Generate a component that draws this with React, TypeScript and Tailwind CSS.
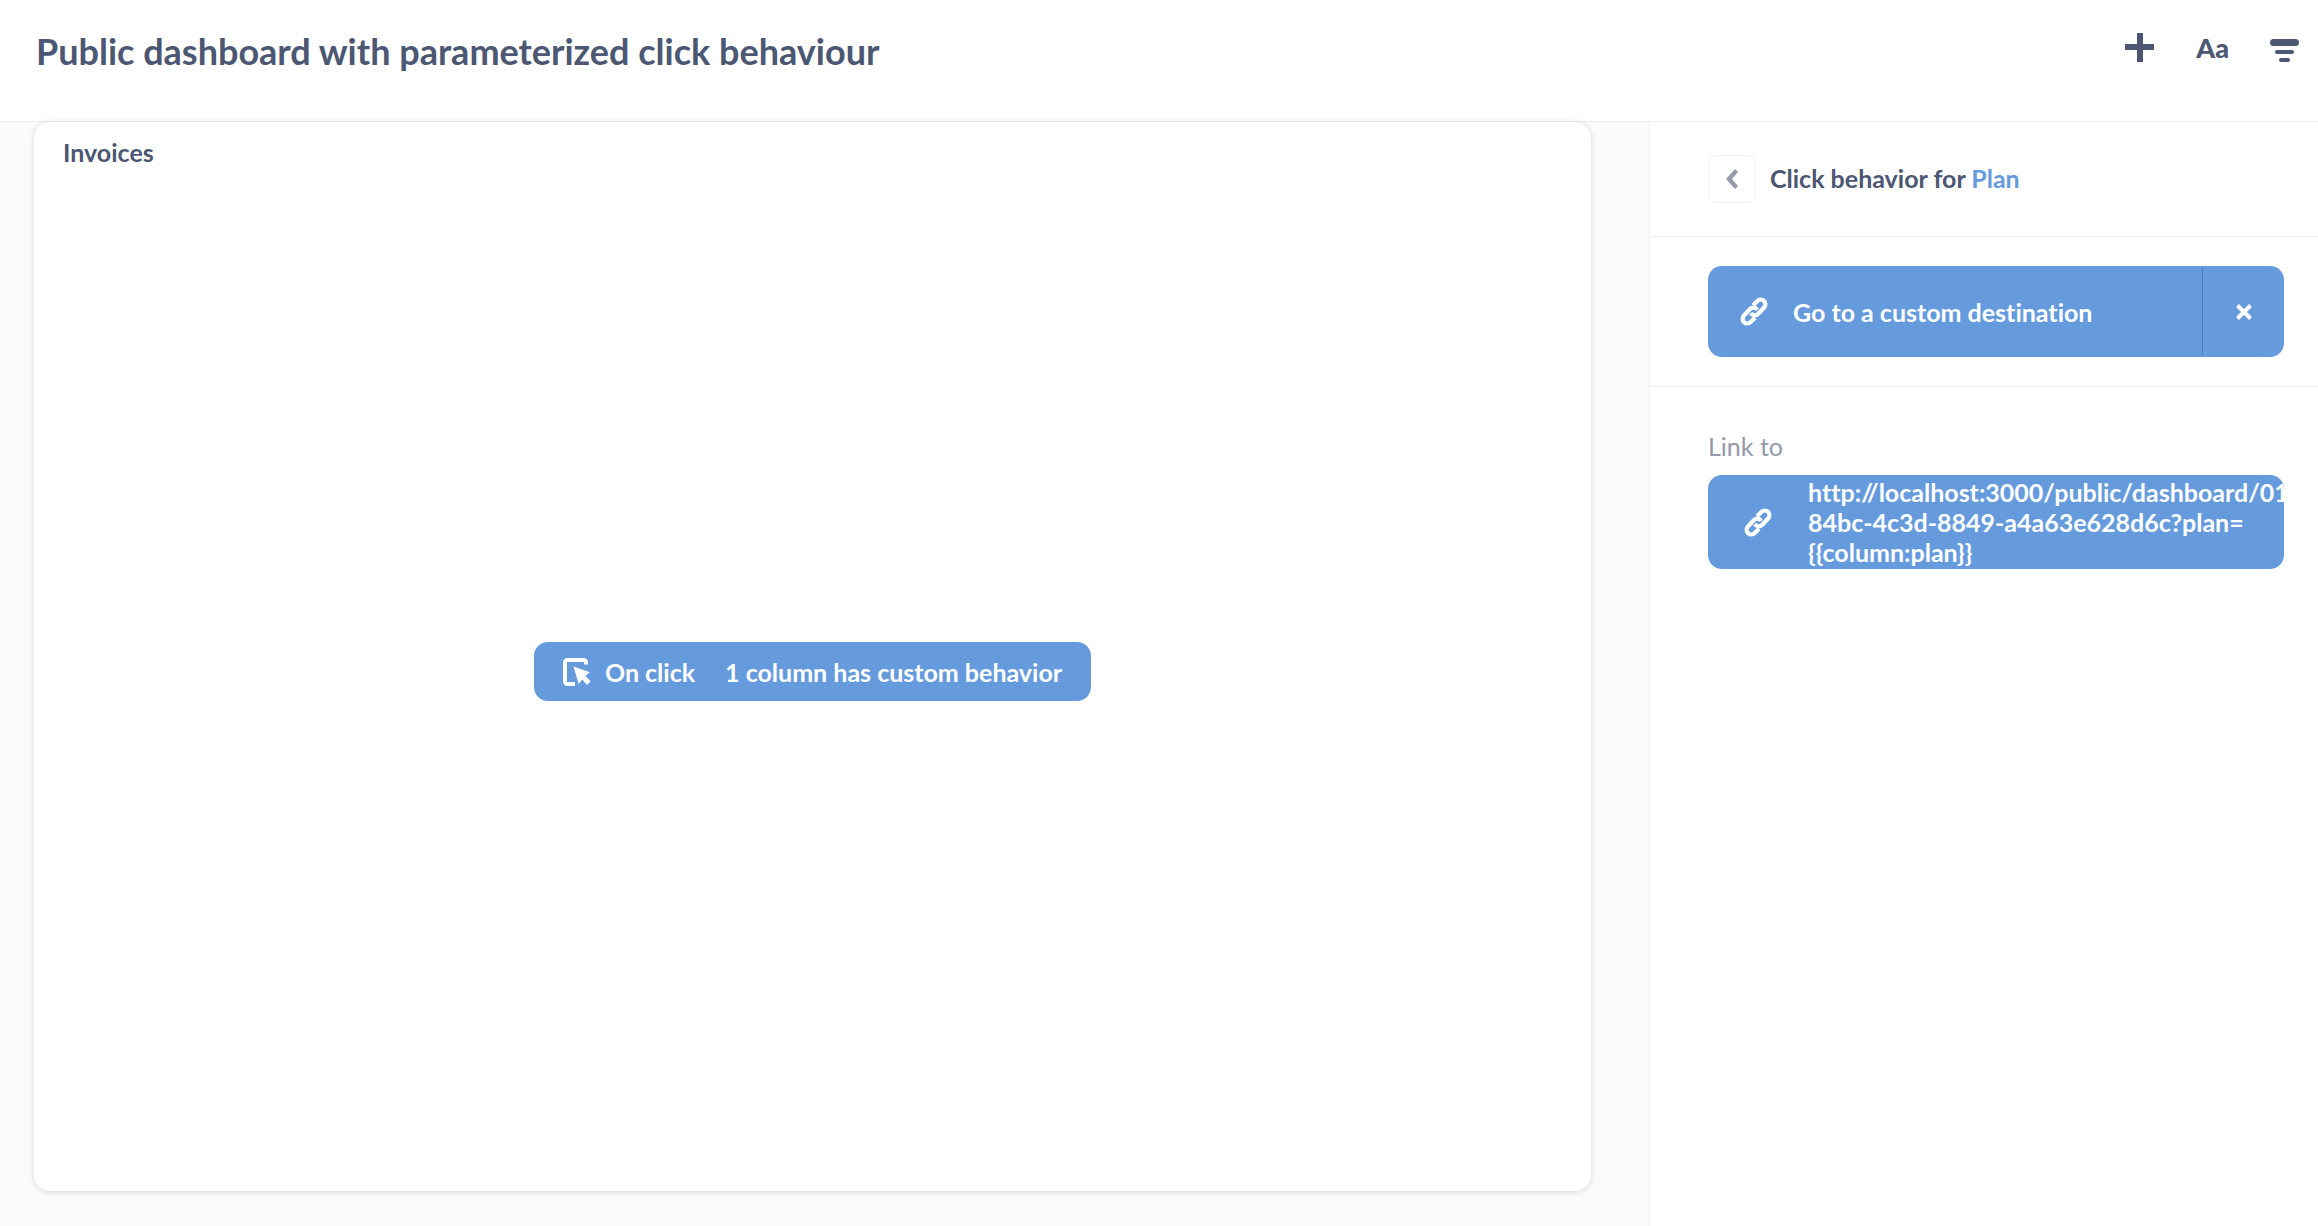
import React from "react";

function LinkIcon() {
  return (
    <svg aria-hidden="true" viewBox="0 0 28 29" className="h-[29px] w-7 shrink-0" fill="none" stroke="currentColor" strokeWidth="4.200">
      <path d="M13 8.300 17.300 4a4.700 4.700 0 0 1 6.800 6.500L18 17a4.700 4.700 0 0 1-7.200-.8" />
      <path d="M15 20.700 10.700 25a4.700 4.700 0 0 1-6.800-6.500L10 12a4.700 4.700 0 0 1 7.200.8" />
    </svg>
  );
}

function ClickIcon() {
  return (
    <svg aria-hidden="true" viewBox="0 0 28 28" className="size-7 shrink-0" fill="none">
      <path d="M23 6.500V4.500A2.500 2.500 0 0 0 20.500 2H4.500A2.500 2.500 0 0 0 2 4.500v19A2.500 2.500 0 0 0 4.500 26H12" stroke="currentColor" strokeWidth="4" />
      <path d="M10.500 8.500 27 14.200 22.300 18l5.400 5.300-3.700 3.700-4.700-5.500-3.600 4.500z" fill="currentColor" />
    </svg>
  );
}

export default function App() {
  return (
    <div className="flex min-h-screen flex-col bg-white font-['Lato',sans-serif] text-[25px] leading-[30px] font-bold text-[#4c5773] [font-variant-ligatures:no-common-ligatures]">
      <header className="flex h-[122px] items-start justify-between border-b border-[#eeeeee] pt-7 pr-[18px] pl-9">
        <h1 className="text-[36px] leading-[46px]">Public dashboard with parameterized click behaviour</h1>
        <div className="flex items-center gap-[41px] pt-1">
          <button aria-label="Add a chart" className="size-[30px]">
            <svg viewBox="0 0 30 30" fill="currentColor"><path d="M12 0h6v11h11v6H18v12h-6V17H0v-6h12z" /></svg>
          </button>
          <button aria-label="Add a text box" className="text-[27px] leading-8 font-black">Aa</button>
          <button aria-label="Add a filter" className="size-[30px]">
            <svg viewBox="0 0 30 30" fill="currentColor"><rect x="0" y="6" width="29" height="7" rx="3.500" /><rect x="5" y="17" width="19" height="4" rx="2" /><rect x="9" y="25" width="11" height="4" rx="2" /></svg>
          </button>
        </div>
      </header>
      <div className="flex flex-1">
        <main className="flex min-w-0 flex-1 bg-[#f9fbfc] pr-[58px] pb-[35px] pl-[34px]">
          <section className="flex flex-1 flex-col rounded-2xl bg-white px-[29px] pt-[15px] pb-[15px] shadow-[0_1px_6px_rgba(0,0,0,0.15)]">
            <h2>Invoices</h2>
            <div className="flex flex-1 items-center justify-center">
              <button className="flex h-[59px] items-center rounded-[14px] bg-[#659bdd] px-[29px] text-white">
                <ClickIcon />
                <span className="ml-[14px]">On click</span>
                <span className="ml-[30px]">1 column has custom behavior</span>
              </button>
            </div>
          </section>
        </main>
        <aside className="w-[669px] shrink-0 border-l border-[#eeeeee] bg-white">
          <div className="flex h-[115px] items-center border-b border-[#eeeeee] pl-[58px]">
            <button aria-label="Back" className="flex size-12 items-center justify-center rounded-lg border border-[#eeeeee] text-[#949aab]">
              <svg viewBox="0 0 12 20" className="h-5 w-3" fill="currentColor"><path d="M0 10 9 0l3 3-6 7 6 7-3 3z" /></svg>
            </button>
            <h2 className="ml-[14px] pb-0.5">Click behavior for <span className="text-[#659bdd]">Plan</span></h2>
          </div>
          <div className="border-b border-[#eeeeee] pt-[29px] pr-[34px] pb-[29px] pl-[58px]">
            <div className="flex h-[91px] items-center rounded-[14px] bg-[#659bdd] text-white">
              <button className="flex h-full flex-1 items-center gap-[25px] pl-8"><LinkIcon />Go to a custom destination</button>
              <button aria-label="Remove click behavior" className="flex h-[89px] w-[82px] items-center justify-center border-l border-[#4580ca]">
                <svg viewBox="0 0 16 16" className="size-4" fill="none" stroke="currentColor" strokeWidth="4"><path d="M1.500 1.500l13 13M14.500 1.500l-13 13" /></svg>
              </button>
            </div>
          </div>
          <div className="pt-11 pr-[34px] pl-[58px]">
            <p className="font-normal text-[#949aab]">Link to</p>
            <button className="mt-[14px] flex h-[94px] w-full items-center gap-9 overflow-hidden rounded-[14px] bg-[#659bdd] pl-9 text-left text-white">
              <LinkIcon />
              <span className="min-w-0 flex-1 whitespace-nowrap">http://localhost:3000/public/dashboard/01<br />84bc-4c3d-8849-a4a63e628d6c?plan=<br />{"{{column:plan}}"}</span>
            </button>
          </div>
        </aside>
      </div>
    </div>
  );
}
